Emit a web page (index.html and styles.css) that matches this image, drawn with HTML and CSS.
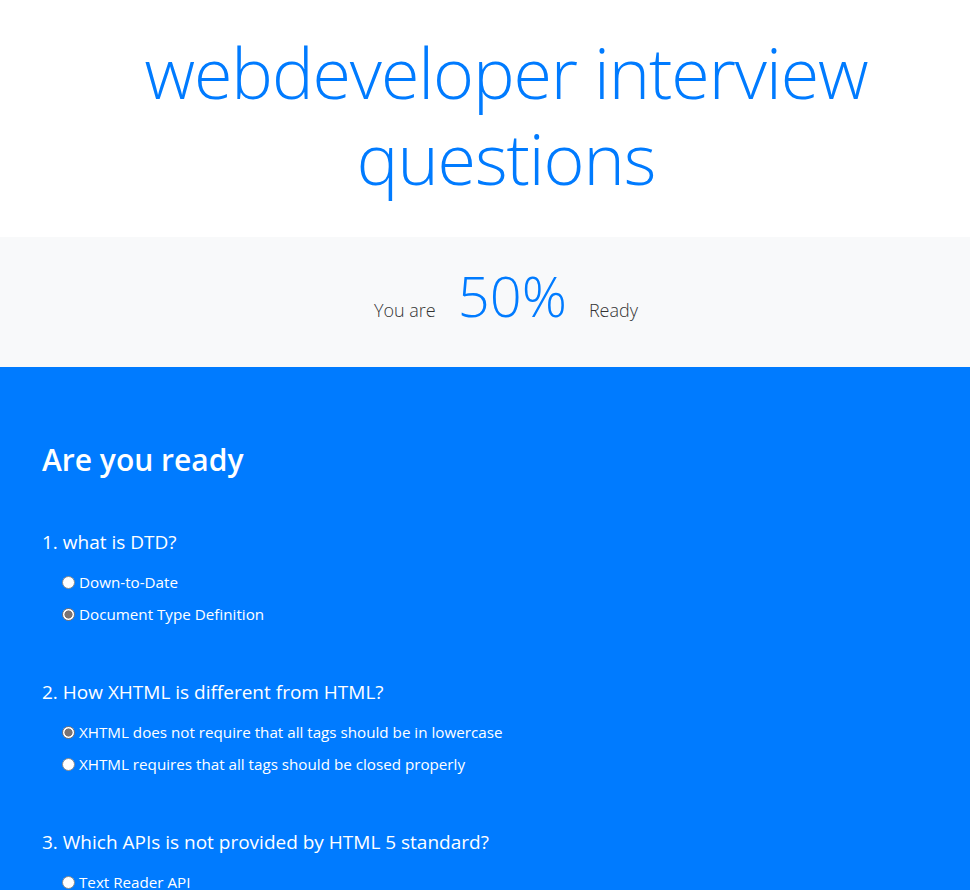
FILE: index.html
```html
<!DOCTYPE html>
<html>
<head>
<meta charset="utf-8">
<link rel="stylesheet" href="styles.css">
</head>
<body>
<header class="hero">
  <h1 class="title">webdeveloper interview questions</h1>
</header>
<section class="progress">
  <span class="small">You are</span>
  <span class="pct">50%</span>
  <span class="small">Ready</span>
</section>
<main class="quiz">
  <h2 class="quiz-title">Are you ready</h2>
  <div class="question">
    <p class="q">1. what is DTD?</p>
    <label class="opt"><input type="radio" name="q1"> Down-to-Date</label>
    <label class="opt"><input type="radio" name="q1" checked> Document Type Definition</label>
  </div>
  <div class="question">
    <p class="q">2. How XHTML is different from HTML?</p>
    <label class="opt"><input type="radio" name="q2" checked> XHTML does not require that all tags should be in lowercase</label>
    <label class="opt"><input type="radio" name="q2"> XHTML requires that all tags should be closed properly</label>
  </div>
  <div class="question">
    <p class="q">3. Which APIs is not provided by HTML 5 standard?</p>
    <label class="opt"><input type="radio" name="q3"> Text Reader API</label>
    <label class="opt"><input type="radio" name="q3"> Offline Web Application Cache API</label>
  </div>
</main>
</body>
</html>
```
FILE: styles.css
```css
html, body {
  margin: 0;
  padding: 0;
}
body {
  font-family: "Open Sans", "Noto Sans", sans-serif;
  color: #212529;
  background: #007bff;
  overflow: hidden;
}
.hero {
  background: #fff;
  height: 237px;
  box-sizing: border-box;
  padding: 29px 60px 0 102px;
  text-align: center;
}
.title {
  margin: 0 auto;
  width: 760px;
  font-size: 70px;
  font-weight: 300;
  line-height: 86px;
  color: #007bff;
  letter-spacing: -1.1px;
}
.progress {
  background: #f8f9fa;
  height: 130px;
  box-sizing: border-box;
  display: flex;
  justify-content: center;
  align-items: baseline;
  padding: 16px 0 0 42px;
  gap: 22px;
}
.small {
  font-size: 18px;
  font-weight: 300;
  color: #333;
}
.pct {
  font-size: 56px;
  font-weight: 300;
  color: #007bff;
  line-height: 84px;
}
.quiz {
  padding: 73px 42px 0;
  color: #fff;
}
.quiz-title {
  margin: 0 0 49px;
  font-size: 30px;
  font-weight: 600;
  line-height: 40px;
}
.question {
  margin-bottom: 49px;
}
.q {
  margin: 0 0 11px;
  font-size: 19px;
  line-height: 26px;
}
.opt {
  display: flex;
  align-items: center;
  gap: 4px;
  padding-left: 20px;
  font-size: 15.2px;
  line-height: 32px;
}
.opt input {
  appearance: none;
  -webkit-appearance: none;
  margin: 0;
  width: 13px;
  height: 13px;
  border-radius: 50%;
  border: 1px solid #8a8a8a;
  background: #fff;
  box-sizing: border-box;
}
.opt input:checked {
  background: radial-gradient(circle, #7a7373 0 3.8px, #fff 4.3px);
  border-color: #7a7373;
}
```
